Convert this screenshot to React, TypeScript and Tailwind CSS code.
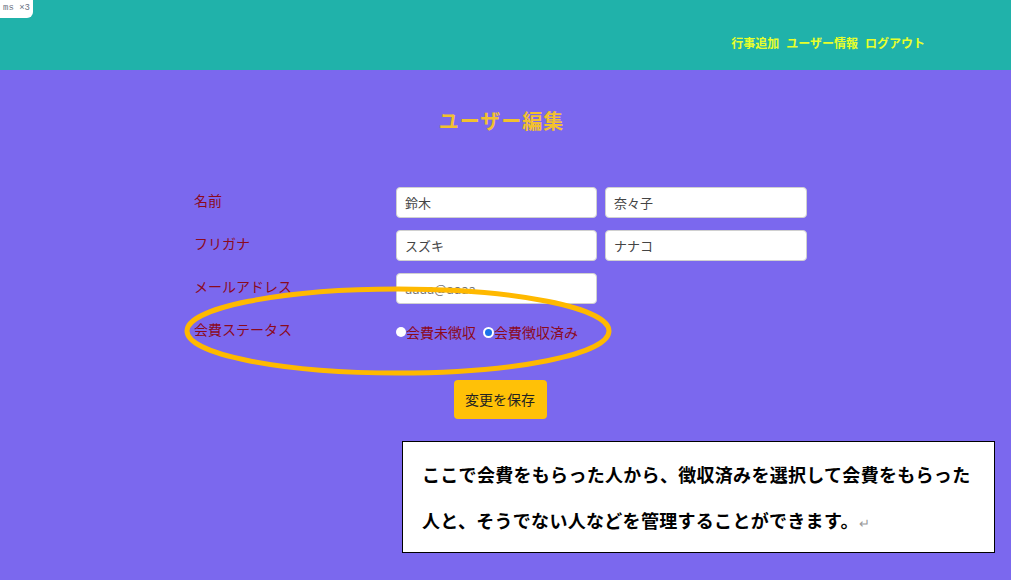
import React from "react";

const jp = { fontFamily: '"Noto Sans CJK JP", "Noto Sans", sans-serif' };

export default function App() {
  return (
    <div className="relative w-[1011px] h-[580px] overflow-hidden bg-[#7b68ee]" style={jp}>
      <header className="relative h-[70px] bg-[#20b2aa] flex items-center justify-end pr-[86px]">
        <div className="absolute left-0 top-0 h-[18px] w-[33px] bg-white rounded-br-[6px] flex items-center justify-end pr-[3px] text-[9px] text-gray-500 font-['Liberation_Mono',monospace]">
          ms ×3
        </div>
        <nav className="flex gap-[7px] text-[12px] font-bold text-[#e8ff2a] mt-[16px]">
          <span>行事追加</span>
          <span>ユーザー情報</span>
          <span>ログアウト</span>
        </nav>
      </header>

      <h1 className="text-center text-[20px] font-bold text-[#f2c12e] mt-[36px] tracking-[1px] pr-[8px]">ユーザー編集</h1>

      <div className="relative ml-[194px] mt-[51px] w-[614px]">
        <div className="grid grid-cols-[194px_201px_202px] gap-x-[8px] gap-y-[12px] items-center">
          <div className="text-[14px] text-[#8b0a1e] -mt-[4px]">名前</div>
          <input readOnly value="鈴木" className="h-[31px] bg-white rounded-[4px] border border-[#d0d0d0] px-[8px] text-[13px] text-[#444]" />
          <input readOnly value="奈々子" className="h-[31px] bg-white rounded-[4px] border border-[#d0d0d0] px-[8px] text-[13px] text-[#444]" />

          <div className="text-[14px] text-[#8b0a1e] -mt-[4px]">フリガナ</div>
          <input readOnly value="スズキ" className="h-[31px] bg-white rounded-[4px] border border-[#d0d0d0] px-[8px] text-[13px] text-[#444]" />
          <input readOnly value="ナナコ" className="h-[31px] bg-white rounded-[4px] border border-[#d0d0d0] px-[8px] text-[13px] text-[#444]" />

          <div className="text-[14px] text-[#8b0a1e] -mt-[4px]">メールアドレス</div>
          <input readOnly placeholder="aaaa@aaaa" className="h-[31px] bg-white rounded-[4px] border border-[#d0d0d0] px-[8px] text-[13px] text-[#444] placeholder:text-[#777]" />
          <div />

          <div className="text-[14px] text-[#8b0a1e] -mt-[4px] pt-[2px]">会費ステータス</div>
          <div className="col-span-2 flex items-center text-[14px] text-[#8b0a1e] h-[28px] pt-[4px]">
            <span className="inline-block w-[10px] h-[10px] rounded-full bg-white" />
            <span className="mr-[7px]">会費未徴収</span>
            <span className="inline-block w-[11px] h-[11px] rounded-full bg-[#1a73e8] border-[2px] border-white" />
            <span>会費徴収済み</span>
          </div>
        </div>

        <svg className="absolute left-[-11px] top-[98px] pointer-events-none" width="432" height="92" viewBox="0 0 432 92">
          <ellipse cx="215" cy="46" rx="211" ry="42" fill="none" stroke="#ffb900" strokeWidth="5" />
        </svg>

        <div className="flex justify-center mt-[36px]">
          <button className="w-[93px] h-[39px] bg-[#ffc107] rounded-[4px] text-[14px] text-[#222] -ml-[2px]">変更を保存</button>
        </div>
      </div>

      <div className="absolute left-[402px] top-[441px] w-[593px] h-[112px] bg-white border border-black pl-[19px] pt-[9px]">
        <p className="text-[18px] font-bold text-black leading-[46px] whitespace-nowrap tracking-[0.3px]">
          ここで会費をもらった人から、徴収済みを選択して会費をもらった
          <br />
          人と、そうでない人などを管理することができます。<span className="text-[#999] font-normal text-[13px]">↵</span>
        </p>
      </div>
    </div>
  );
}
